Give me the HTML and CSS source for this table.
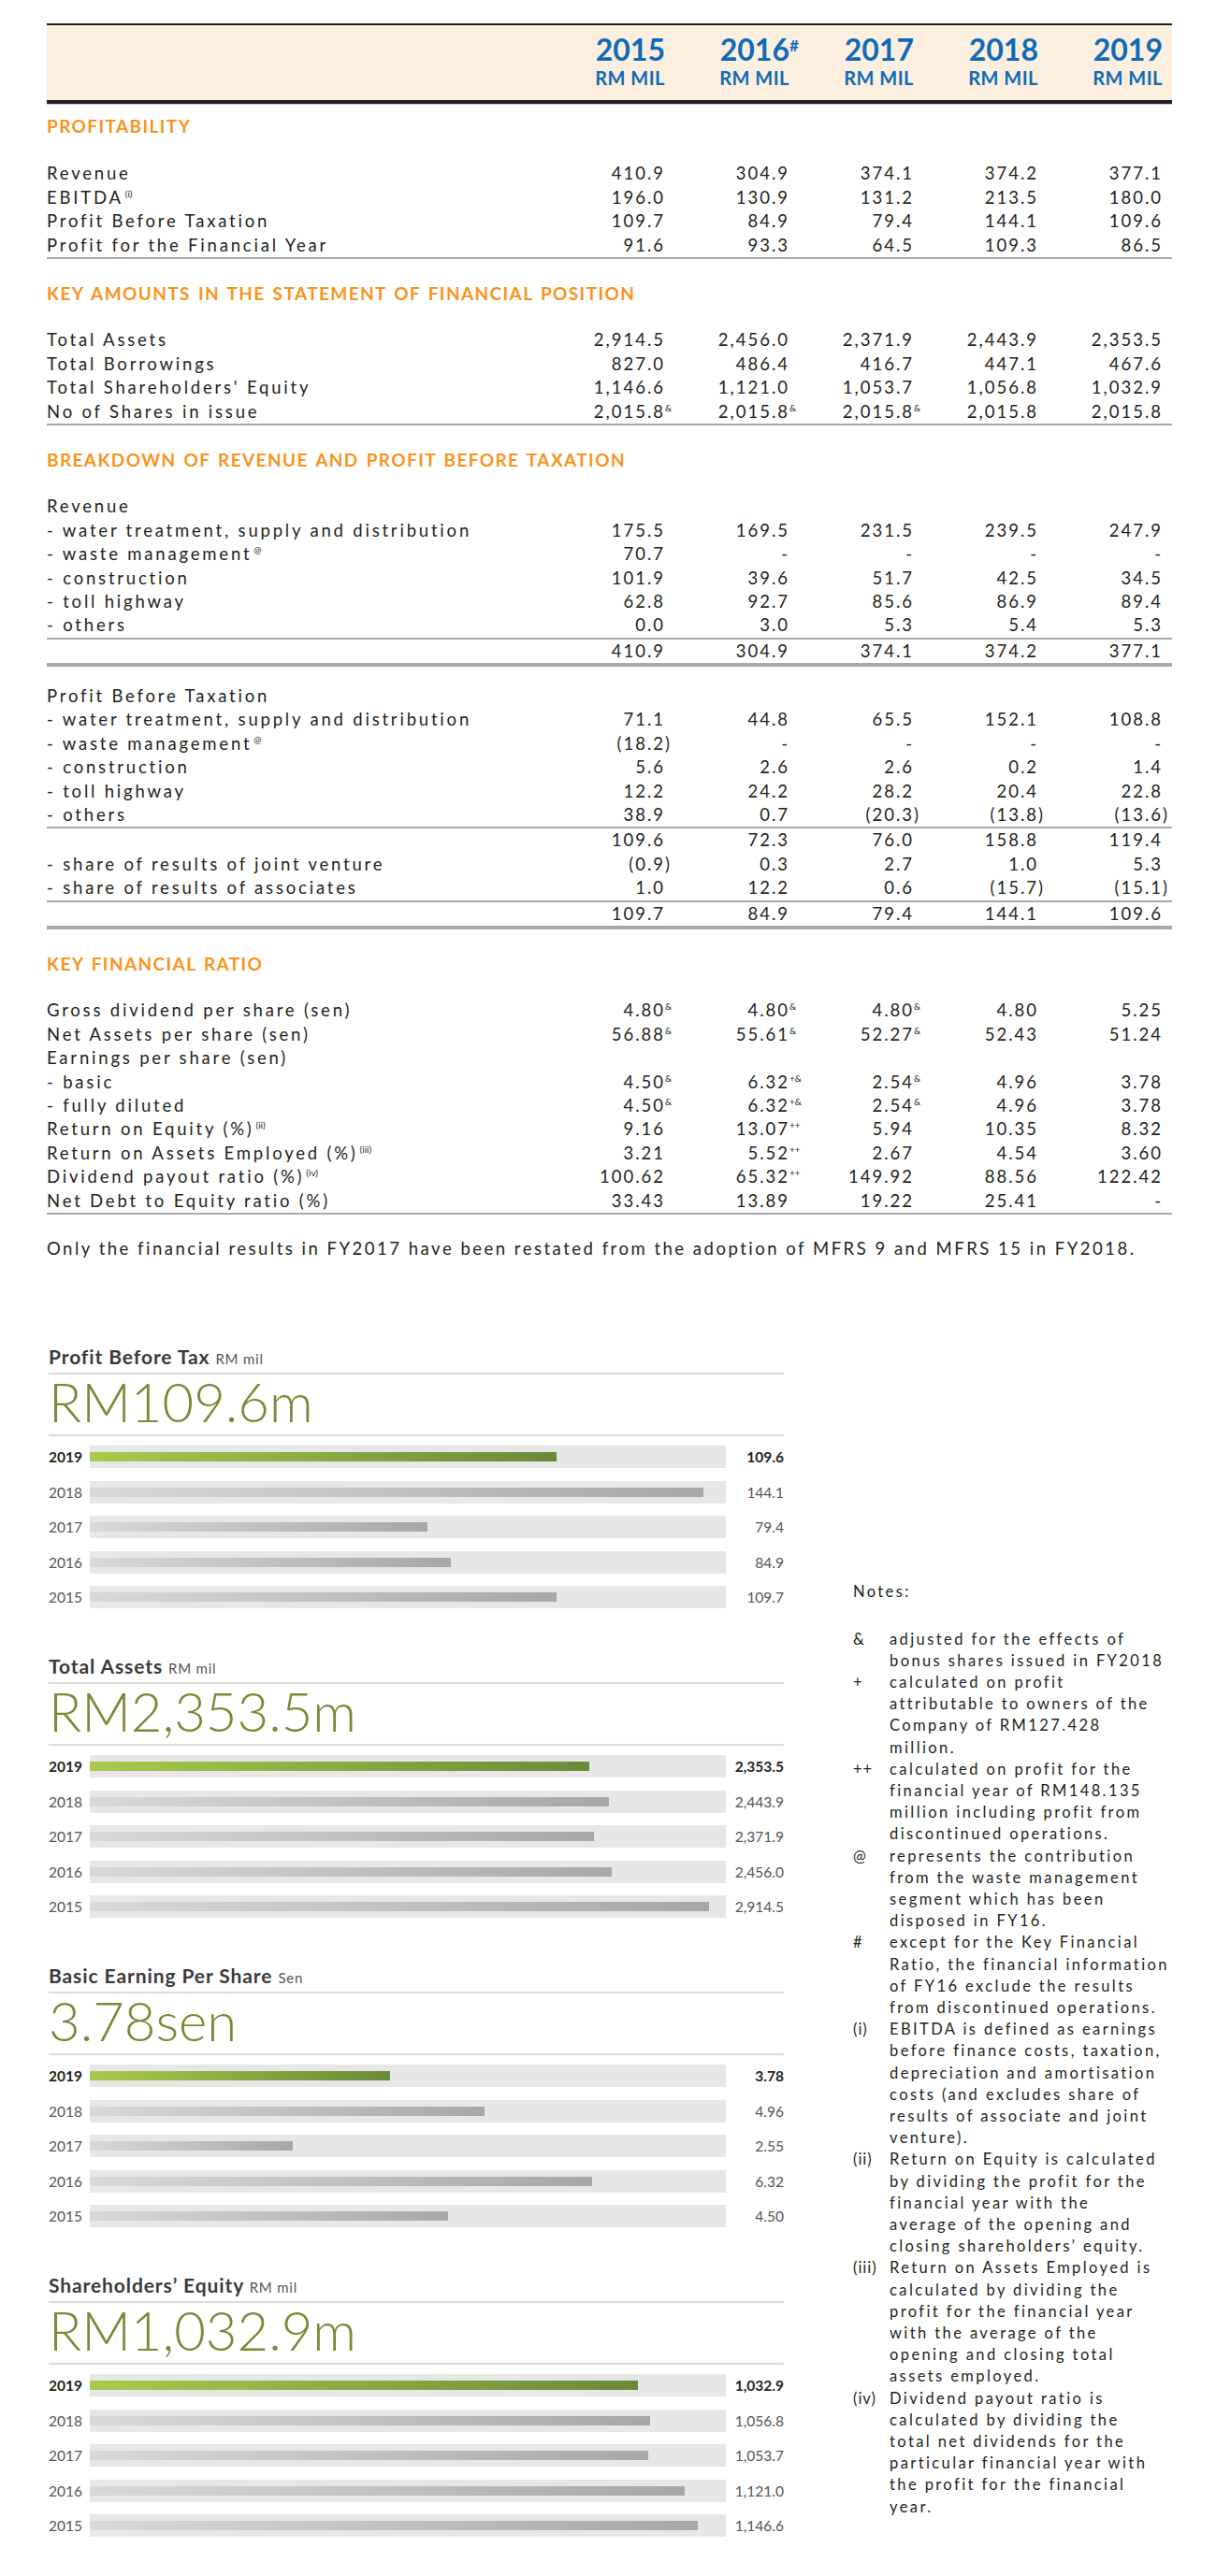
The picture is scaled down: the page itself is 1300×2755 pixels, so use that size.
FILE: index.html
```html
<!DOCTYPE html>
<html lang="en">
<head>
<meta charset="utf-8">
<title>Five-Year Financial Highlights</title>
<link rel="stylesheet" href="styles.css">
</head>
<body>
<div class="page">
  <section class="fin">
    <div class="fin-head">
      <div></div>
      <div class="yr"><span class="yr-n">2015</span><span class="yr-u">RM MIL</span></div>
      <div class="yr"><span class="yr-n">2016<span class="hang yr-sup">#</span></span><span class="yr-u">RM MIL</span></div>
      <div class="yr"><span class="yr-n">2017</span><span class="yr-u">RM MIL</span></div>
      <div class="yr"><span class="yr-n">2018</span><span class="yr-u">RM MIL</span></div>
      <div class="yr"><span class="yr-n">2019</span><span class="yr-u">RM MIL</span></div>
    </div>

    <h2 class="sec sec-first">PROFITABILITY</h2>
    <div class="grp">
      <div class="row"><span class="lbl">Revenue</span><span class="n">410.9</span><span class="n">304.9</span><span class="n">374.1</span><span class="n">374.2</span><span class="n">377.1</span></div>
      <div class="row"><span class="lbl">EBITDA<sup>(i)</sup></span><span class="n">196.0</span><span class="n">130.9</span><span class="n">131.2</span><span class="n">213.5</span><span class="n">180.0</span></div>
      <div class="row"><span class="lbl">Profit Before Taxation</span><span class="n">109.7</span><span class="n">84.9</span><span class="n">79.4</span><span class="n">144.1</span><span class="n">109.6</span></div>
      <div class="row"><span class="lbl">Profit for the Financial Year</span><span class="n">91.6</span><span class="n">93.3</span><span class="n">64.5</span><span class="n">109.3</span><span class="n">86.5</span></div>
    </div>

    <h2 class="sec">KEY AMOUNTS IN THE STATEMENT OF FINANCIAL POSITION</h2>
    <div class="grp">
      <div class="row"><span class="lbl">Total Assets</span><span class="n">2,914.5</span><span class="n">2,456.0</span><span class="n">2,371.9</span><span class="n">2,443.9</span><span class="n">2,353.5</span></div>
      <div class="row"><span class="lbl">Total Borrowings</span><span class="n">827.0</span><span class="n">486.4</span><span class="n">416.7</span><span class="n">447.1</span><span class="n">467.6</span></div>
      <div class="row"><span class="lbl">Total Shareholders' Equity</span><span class="n">1,146.6</span><span class="n">1,121.0</span><span class="n">1,053.7</span><span class="n">1,056.8</span><span class="n">1,032.9</span></div>
      <div class="row"><span class="lbl">No of Shares in issue</span><span class="n">2,015.8<span class="hang mark">&amp;</span></span><span class="n">2,015.8<span class="hang mark">&amp;</span></span><span class="n">2,015.8<span class="hang mark">&amp;</span></span><span class="n">2,015.8</span><span class="n">2,015.8</span></div>
    </div>

    <h2 class="sec">BREAKDOWN OF REVENUE AND PROFIT BEFORE TAXATION</h2>
    <div class="grp grp-thick">
      <div class="row"><span class="lbl">Revenue</span></div>
      <div class="row"><span class="lbl">- water treatment, supply and distribution</span><span class="n">175.5</span><span class="n">169.5</span><span class="n">231.5</span><span class="n">239.5</span><span class="n">247.9</span></div>
      <div class="row"><span class="lbl">- waste management<sup>@</sup></span><span class="n">70.7</span><span class="n">-</span><span class="n">-</span><span class="n">-</span><span class="n">-</span></div>
      <div class="row"><span class="lbl">- construction</span><span class="n">101.9</span><span class="n">39.6</span><span class="n">51.7</span><span class="n">42.5</span><span class="n">34.5</span></div>
      <div class="row"><span class="lbl">- toll highway</span><span class="n">62.8</span><span class="n">92.7</span><span class="n">85.6</span><span class="n">86.9</span><span class="n">89.4</span></div>
      <div class="row"><span class="lbl">- others</span><span class="n">0.0</span><span class="n">3.0</span><span class="n">5.3</span><span class="n">5.4</span><span class="n">5.3</span></div>
      <div class="row sum"><span class="lbl"></span><span class="n">410.9</span><span class="n">304.9</span><span class="n">374.1</span><span class="n">374.2</span><span class="n">377.1</span></div>
    </div>

    <div class="grp grp-thick grp-gap">
      <div class="row"><span class="lbl">Profit Before Taxation</span></div>
      <div class="row"><span class="lbl">- water treatment, supply and distribution</span><span class="n">71.1</span><span class="n">44.8</span><span class="n">65.5</span><span class="n">152.1</span><span class="n">108.8</span></div>
      <div class="row"><span class="lbl">- waste management<sup>@</sup></span><span class="n">(18.2<span class="hang">)</span></span><span class="n">-</span><span class="n">-</span><span class="n">-</span><span class="n">-</span></div>
      <div class="row"><span class="lbl">- construction</span><span class="n">5.6</span><span class="n">2.6</span><span class="n">2.6</span><span class="n">0.2</span><span class="n">1.4</span></div>
      <div class="row"><span class="lbl">- toll highway</span><span class="n">12.2</span><span class="n">24.2</span><span class="n">28.2</span><span class="n">20.4</span><span class="n">22.8</span></div>
      <div class="row"><span class="lbl">- others</span><span class="n">38.9</span><span class="n">0.7</span><span class="n">(20.3<span class="hang">)</span></span><span class="n">(13.8<span class="hang">)</span></span><span class="n">(13.6<span class="hang">)</span></span></div>
      <div class="row sum"><span class="lbl"></span><span class="n">109.6</span><span class="n">72.3</span><span class="n">76.0</span><span class="n">158.8</span><span class="n">119.4</span></div>
      <div class="row"><span class="lbl">- share of results of joint venture</span><span class="n">(0.9<span class="hang">)</span></span><span class="n">0.3</span><span class="n">2.7</span><span class="n">1.0</span><span class="n">5.3</span></div>
      <div class="row"><span class="lbl">- share of results of associates</span><span class="n">1.0</span><span class="n">12.2</span><span class="n">0.6</span><span class="n">(15.7<span class="hang">)</span></span><span class="n">(15.1<span class="hang">)</span></span></div>
      <div class="row sum"><span class="lbl"></span><span class="n">109.7</span><span class="n">84.9</span><span class="n">79.4</span><span class="n">144.1</span><span class="n">109.6</span></div>
    </div>

    <h2 class="sec">KEY FINANCIAL RATIO</h2>
    <div class="grp">
      <div class="row"><span class="lbl">Gross dividend per share (sen)</span><span class="n">4.80<span class="hang mark">&amp;</span></span><span class="n">4.80<span class="hang mark">&amp;</span></span><span class="n">4.80<span class="hang mark">&amp;</span></span><span class="n">4.80</span><span class="n">5.25</span></div>
      <div class="row"><span class="lbl">Net Assets per share (sen)</span><span class="n">56.88<span class="hang mark">&amp;</span></span><span class="n">55.61<span class="hang mark">&amp;</span></span><span class="n">52.27<span class="hang mark">&amp;</span></span><span class="n">52.43</span><span class="n">51.24</span></div>
      <div class="row"><span class="lbl">Earnings per share (sen)</span></div>
      <div class="row"><span class="lbl">- basic</span><span class="n">4.50<span class="hang mark">&amp;</span></span><span class="n">6.32<span class="hang mark">+&amp;</span></span><span class="n">2.54<span class="hang mark">&amp;</span></span><span class="n">4.96</span><span class="n">3.78</span></div>
      <div class="row"><span class="lbl">- fully diluted</span><span class="n">4.50<span class="hang mark">&amp;</span></span><span class="n">6.32<span class="hang mark">+&amp;</span></span><span class="n">2.54<span class="hang mark">&amp;</span></span><span class="n">4.96</span><span class="n">3.78</span></div>
      <div class="row"><span class="lbl">Return on Equity (%)<sup>(ii)</sup></span><span class="n">9.16</span><span class="n">13.07<span class="hang mark">++</span></span><span class="n">5.94</span><span class="n">10.35</span><span class="n">8.32</span></div>
      <div class="row"><span class="lbl">Return on Assets Employed (%)<sup>(iii)</sup></span><span class="n">3.21</span><span class="n">5.52<span class="hang mark">++</span></span><span class="n">2.67</span><span class="n">4.54</span><span class="n">3.60</span></div>
      <div class="row"><span class="lbl">Dividend payout ratio (%)<sup>(iv)</sup></span><span class="n">100.62</span><span class="n">65.32<span class="hang mark">++</span></span><span class="n">149.92</span><span class="n">88.56</span><span class="n">122.42</span></div>
      <div class="row"><span class="lbl">Net Debt to Equity ratio (%)</span><span class="n">33.43</span><span class="n">13.89</span><span class="n">19.22</span><span class="n">25.41</span><span class="n">-</span></div>
    </div>
  </section>

  <p class="restated">Only the financial results in FY2017 have been restated from the adoption of MFRS 9 and MFRS 15 in FY2018.</p>

  <div class="lower">
    <div class="charts">
      <div class="chart">
        <h3 class="ch-title">Profit Before Tax <span class="ch-unit">RM mil</span></h3>
        <div class="ch-big">RM109.6m</div>
        <div class="bars">
          <div class="bar-row cur"><span>2019</span><div class="track"><div class="fill" style="width:73.4%"></div></div><span class="val">109.6</span></div>
          <div class="bar-row"><span>2018</span><div class="track"><div class="fill" style="width:96.5%"></div></div><span class="val">144.1</span></div>
          <div class="bar-row"><span>2017</span><div class="track"><div class="fill" style="width:53.1%"></div></div><span class="val">79.4</span></div>
          <div class="bar-row"><span>2016</span><div class="track"><div class="fill" style="width:56.8%"></div></div><span class="val">84.9</span></div>
          <div class="bar-row"><span>2015</span><div class="track"><div class="fill" style="width:73.4%"></div></div><span class="val">109.7</span></div>
        </div>
      </div>

      <div class="chart">
        <h3 class="ch-title">Total Assets <span class="ch-unit">RM mil</span></h3>
        <div class="ch-big">RM2,353.5m</div>
        <div class="bars">
          <div class="bar-row cur"><span>2019</span><div class="track"><div class="fill" style="width:78.5%"></div></div><span class="val">2,353.5</span></div>
          <div class="bar-row"><span>2018</span><div class="track"><div class="fill" style="width:81.6%"></div></div><span class="val">2,443.9</span></div>
          <div class="bar-row"><span>2017</span><div class="track"><div class="fill" style="width:79.3%"></div></div><span class="val">2,371.9</span></div>
          <div class="bar-row"><span>2016</span><div class="track"><div class="fill" style="width:82.1%"></div></div><span class="val">2,456.0</span></div>
          <div class="bar-row"><span>2015</span><div class="track"><div class="fill" style="width:97.4%"></div></div><span class="val">2,914.5</span></div>
        </div>
      </div>

      <div class="chart">
        <h3 class="ch-title">Basic Earning Per Share <span class="ch-unit">Sen</span></h3>
        <div class="ch-big">3.78sen</div>
        <div class="bars">
          <div class="bar-row cur"><span>2019</span><div class="track"><div class="fill" style="width:47.2%"></div></div><span class="val">3.78</span></div>
          <div class="bar-row"><span>2018</span><div class="track"><div class="fill" style="width:62.1%"></div></div><span class="val">4.96</span></div>
          <div class="bar-row"><span>2017</span><div class="track"><div class="fill" style="width:31.9%"></div></div><span class="val">2.55</span></div>
          <div class="bar-row"><span>2016</span><div class="track"><div class="fill" style="width:79.0%"></div></div><span class="val">6.32</span></div>
          <div class="bar-row"><span>2015</span><div class="track"><div class="fill" style="width:56.3%"></div></div><span class="val">4.50</span></div>
        </div>
      </div>

      <div class="chart">
        <h3 class="ch-title">Shareholders’ Equity <span class="ch-unit">RM mil</span></h3>
        <div class="ch-big">RM1,032.9m</div>
        <div class="bars">
          <div class="bar-row cur"><span>2019</span><div class="track"><div class="fill" style="width:86.2%"></div></div><span class="val">1,032.9</span></div>
          <div class="bar-row"><span>2018</span><div class="track"><div class="fill" style="width:88.1%"></div></div><span class="val">1,056.8</span></div>
          <div class="bar-row"><span>2017</span><div class="track"><div class="fill" style="width:87.8%"></div></div><span class="val">1,053.7</span></div>
          <div class="bar-row"><span>2016</span><div class="track"><div class="fill" style="width:93.5%"></div></div><span class="val">1,121.0</span></div>
          <div class="bar-row"><span>2015</span><div class="track"><div class="fill" style="width:95.6%"></div></div><span class="val">1,146.6</span></div>
        </div>
      </div>
    </div>

    <aside class="notes">
      <p class="notes-head">Notes:</p>
      <div class="note"><span>&amp;</span><span>adjusted for the effects of<br>bonus shares issued in FY2018</span></div>
      <div class="note"><span>+</span><span>calculated on profit<br>attributable to owners of the<br>Company of RM127.428<br>million.</span></div>
      <div class="note"><span>++</span><span>calculated on profit for the<br>financial year of RM148.135<br>million including profit from<br>discontinued operations.</span></div>
      <div class="note"><span>@</span><span>represents the contribution<br>from the waste management<br>segment which has been<br>disposed in FY16.</span></div>
      <div class="note"><span>#</span><span>except for the Key Financial<br>Ratio, the financial information<br>of FY16 exclude the results<br>from discontinued operations.</span></div>
      <div class="note"><span>(i)</span><span>EBITDA is defined as earnings<br>before finance costs, taxation,<br>depreciation and amortisation<br>costs (and excludes share of<br>results of associate and joint<br>venture).</span></div>
      <div class="note"><span>(ii)</span><span>Return on Equity is calculated<br>by dividing the profit for the<br>financial year with the<br>average of the opening and<br>closing shareholders’ equity.</span></div>
      <div class="note"><span>(iii)</span><span>Return on Assets Employed is<br>calculated by dividing the<br>profit for the financial year<br>with the average of the<br>opening and closing total<br>assets employed.</span></div>
      <div class="note"><span>(iv)</span><span>Dividend payout ratio is<br>calculated by dividing the<br>total net dividends for the<br>particular financial year with<br>the profit for the financial<br>year.</span></div>
    </aside>
  </div>
</div>
</body>
</html>
```

FILE: styles.css
```css
* { box-sizing: border-box; }

body {
  margin: 0;
  background: #ffffff;
  color: #231f20;
  font-family: "Lato", "DejaVu Sans", sans-serif;
}

.page {
  width: 1300px;
  padding: 25px 47px 0 50px;
}

/* ---------- table ---------- */
.fin-head {
  display: grid;
  grid-template-columns: 1fr repeat(5, 133px);
  padding: 10px 10px 14px 0;
  background: #fdefe0;
  border-top: 2px solid #231f20;
  border-bottom: 4px solid #231f20;
  box-shadow: 0 1px 0 #c9c9c9;
}

.yr {
  text-align: right;
  color: #0d6ab7;
  font-weight: 700;
}

.yr-n {
  display: block;
  font-size: 32px;
  line-height: 32px;
}

.yr-u {
  display: block;
  font-size: 20px;
  line-height: 20px;
  margin-top: 4px;
  letter-spacing: 0.5px;
}

.hang {
  display: inline-block;
  width: 0;
  white-space: nowrap;
  text-align: left;
}

.yr-sup {
  font-size: 17px;
  vertical-align: 10px;
  line-height: 0;
}

.mark {
  font-size: 10px;
  letter-spacing: 0;
  vertical-align: 7px;
  line-height: 0;
}

.sec {
  margin: 24px 0 25px;
  font-size: 19px;
  line-height: 25.4px;
  font-weight: 700;
  color: #f7941d;
  letter-spacing: 1.4px;
  word-spacing: 2px;
}

.sec-first {
  margin-top: 11px;
  margin-bottom: 26px;
}

.grp {
  border-bottom: 2px solid #a7a9ac;
}

.grp-thick {
  border-bottom: 4px solid #a7a9ac;
}

.grp-gap {
  margin-top: 19px;
}

.row {
  display: grid;
  grid-template-columns: 1fr repeat(5, 133px);
  padding-right: 10px;
  height: 25.4px;
  align-items: center;
  font-size: 18.5px;
  line-height: 25.4px;
  white-space: nowrap;
}

.row.sum {
  border-top: 2px solid #a7a9ac;
  height: 27.4px;
}

.lbl {
  letter-spacing: 2.8px;
}

.lbl sup {
  font-size: 10px;
  letter-spacing: 0;
  vertical-align: 7px;
  line-height: 0;
  margin-left: 2px;
}

.n {
  text-align: right;
  letter-spacing: 2px;
}

.restated {
  margin: 24px 0 0;
  font-size: 18.5px;
  line-height: 25.4px;
  letter-spacing: 2.5px;
}

/* ---------- lower section ---------- */
.lower {
  display: flex;
  margin-top: 91px;
}

.charts {
  width: 786px;
  margin-left: 2px;
}

.chart + .chart {
  margin-top: 50px;
}

.ch-title {
  margin: 0;
  height: 31px;
  font-size: 21px;
  line-height: 24px;
  font-weight: 700;
  letter-spacing: 0.9px;
  color: #3a3a3a;
  padding-bottom: 5px;
  border-bottom: 2px solid #dcdcdc;
}

.ch-unit {
  font-size: 15px;
  line-height: 1;
  font-weight: 400;
  letter-spacing: 0.8px;
  color: #555555;
}

.ch-big {
  height: 66px;
  font-size: 58px;
  line-height: 58px;
  font-weight: 300;
  color: #778b35;
  padding-bottom: 6px;
  border-bottom: 2px solid #dcdcdc;
}

.bars {
  margin-top: 10px;
  display: flex;
  flex-direction: column;
  gap: 13.5px;
}

.bar-row {
  display: grid;
  grid-template-columns: 44px 680px 1fr;
  align-items: center;
  height: 24px;
  line-height: 24px;
  font-size: 15.5px;
  color: #555555;
}

.track {
  height: 24px;
  background: #e7e7e8;
  display: flex;
  align-items: center;
}

.fill {
  height: 10px;
  background: linear-gradient(90deg, #d8d9db, #a6a7aa);
}

.cur {
  font-weight: 700;
  color: #231f20;
}

.cur .fill {
  background: linear-gradient(90deg, #a9c94d, #6a8a39);
}

.val {
  text-align: right;
}

/* ---------- notes ---------- */
.notes {
  width: 340px;
  margin-left: 74px;
  padding-top: 252px;
  font-size: 16.5px;
  line-height: 23.2px;
  letter-spacing: 2.4px;
  white-space: nowrap;
}

.notes-head {
  margin: 0 0 27px;
}

.note {
  display: grid;
  grid-template-columns: 39px 1fr;
}

.note > span:first-child {
  letter-spacing: 1px;
}
```
